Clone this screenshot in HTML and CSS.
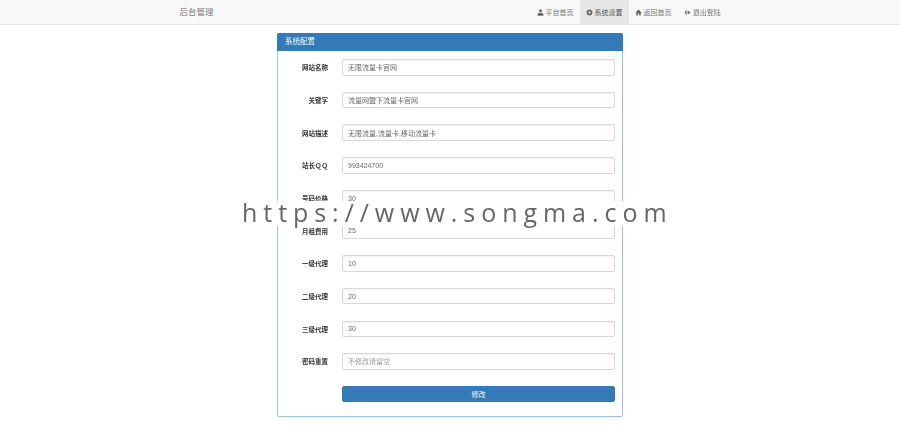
FILE: index.html
```html
<!DOCTYPE html>
<html lang="zh-CN">
<head>
<meta charset="utf-8">
<title>后台管理</title>
<link rel="stylesheet" href="styles.css">
</head>
<body>
<div class="page">
  <nav class="navbar">
    <div class="nav-inner">
      <a class="brand">后台管理</a>
      <ul class="nav-links">
        <li><svg class="ico" viewBox="0 0 12 12"><circle cx="6" cy="3.2" r="2.6"/><path d="M1 11.5V9.5C1 7.8 3 7 6 7s5 .8 5 2.5v2z"/></svg>平台首页</li>
        <li class="active"><svg class="ico" viewBox="0 0 12 12"><path fill-rule="evenodd" d="M6 1a5 5 0 1 0 0 10A5 5 0 0 0 6 1zm0 3a2 2 0 1 1 0 4 2 2 0 0 1 0-4z"/></svg>系统设置</li>
        <li><svg class="ico" viewBox="0 0 12 12"><path d="M6 1 .5 6.3h1.7V11h2.7V7.8h2.2V11h2.7V6.3h1.7z"/></svg>返回首页</li>
        <li><svg class="ico" viewBox="0 0 12 12"><path d="M5.5 2A4 4 0 1 0 5.5 10V8.3A2.3 2.3 0 1 1 5.5 3.7z"/><path d="M7 3.2 11.5 6 7 8.8V7H4.5V5H7z"/></svg>退出登陆</li>
      </ul>
    </div>
  </nav>
  <main class="panel">
    <div class="panel-heading">系统配置</div>
    <form class="panel-body">
      <div class="row"><label>网站名称</label><input class="field" value="无限流量卡官网"></div>
      <div class="row"><label>关键字</label><input class="field" value="流量网盟下流量卡官网"></div>
      <div class="row"><label>网站描述</label><input class="field" value="无限流量,流量卡,移动流量卡"></div>
      <div class="row"><label>站长ＱＱ</label><input class="field" value="993424700"></div>
      <div class="row"><label>号码价格</label><input class="field" value="30"></div>
      <div class="row"><label>月租费用</label><input class="field" value="25"></div>
      <div class="row"><label>一级代理</label><input class="field" value="10"></div>
      <div class="row"><label>二级代理</label><input class="field" value="20"></div>
      <div class="row"><label>三级代理</label><input class="field" value="30"></div>
      <div class="row"><label>密码重置</label><input class="field" placeholder="不修改请留空"></div>
      <div class="row"><span class="spacer"></span><button type="button" class="submit">修改</button></div>
    </form>
  </main>
  <div class="watermark">https://www.songma.com</div>
</div>
</body>
</html>
```

FILE: styles.css
```css
* { box-sizing: border-box; }
html, body { margin: 0; height: 100%; background: #fff; overflow: hidden; }
.page {
  position: relative;
  width: 900px;
  height: 426px;
  font-family: "Liberation Sans", "Noto Sans CJK SC", sans-serif;
  font-size: 7px;
  color: #333;
  filter: blur(0.5px);
}
.navbar {
  height: 25px;
  background: #f8f8f8;
  border-bottom: 1px solid #e7e7e7;
}
.nav-inner {
  width: 585px;
  margin: 0 auto;
  padding-left: 22px;
  padding-right: 15.5px;
  display: flex;
  justify-content: space-between;
  align-items: stretch;
  height: 24px;
}
.brand { font-size: 8.5px; line-height: 24px; color: #777; }
.nav-links { display: flex; list-style: none; margin: 0; padding: 0; }
.nav-links li {
  display: flex;
  align-items: center;
  gap: 1.5px;
  padding: 0 6.3px;
  color: #777;
}
.nav-links li.active { background: #e7e7e7; color: #555; }
.ico { width: 7px; height: 7px; fill: #666; flex: none; }
.panel {
  width: 346px;
  height: 384px;
  margin: 8px auto 0;
  border: 1px solid #9cc0e0;
  border-radius: 2px;
  box-shadow: 0 1px 1px rgba(0, 0, 0, .05);
}
.panel-heading {
  height: 18px;
  margin: -1px -1px 0;
  padding-left: 8px;
  background: #337ab7;
  color: #fff;
  font-size: 7.5px;
  line-height: 18px;
  border-radius: 2px 2px 0 0;
}
.panel-body {
  display: flex;
  flex-direction: column;
  gap: 16.2px;
  padding: 8px 7px 0 0;
}
.row { display: flex; align-items: center; height: 16.5px; }
.row label {
  width: 50px;
  margin-right: 14px;
  text-align: right;
  font-weight: 700;
  font-size: 6.5px;
  color: #333;
}
.spacer { width: 64px; flex: none; }
.field {
  flex: 1;
  min-width: 0;
  height: 16.5px;
  padding: 0 5px;
  border: 1px solid #d8d8d8;
  border-radius: 2px;
  background: #fff;
  box-shadow: inset 0 1px 1px rgba(0, 0, 0, .05);
  font: inherit;
  font-size: 7px;
  color: #666;
  outline: none;
}
.field::placeholder { color: #999; opacity: 1; }
.submit {
  flex: 1;
  height: 16.5px;
  padding: 0;
  border: 1px solid #337ab7;
  border-radius: 2px;
  background: #337ab7;
  color: #fff;
  font: inherit;
  font-size: 7px;
}
.watermark {
  position: absolute;
  left: 236px;
  top: 201px;
  width: 440px;
  height: 25px;
  background: #fff;
  color: #666;
  font-family: "Open Sans", "Liberation Sans", sans-serif;
  font-size: 25px;
  line-height: 23px;
  letter-spacing: 5.95px;
  white-space: nowrap;
  padding-left: 6px;
}
```
